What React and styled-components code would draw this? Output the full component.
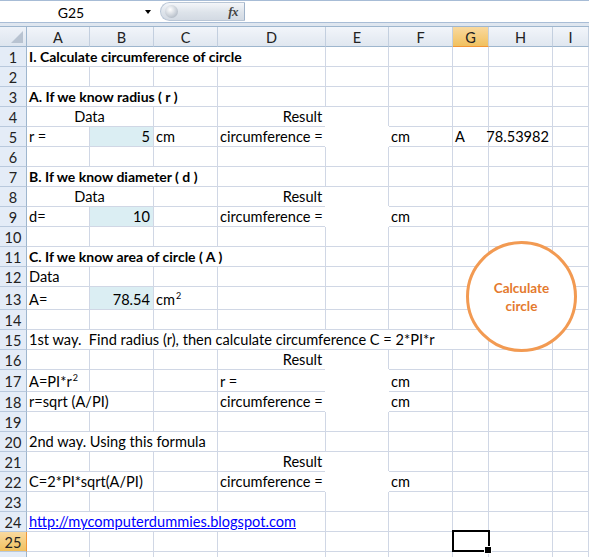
import React from 'react';
import styled, { createGlobalStyle, css } from 'styled-components';

const Global = createGlobalStyle`
  html, body { margin: 0; padding: 0; background: #fff; }
  body { font-family: Lato, "Liberation Sans", sans-serif; }
  * { box-sizing: border-box; }
`;

const COLS = '27px 63px 64px 64px 108px 63px 64px 36px 64px 1fr';
const GRID = '#d0d7e5';

const Window = styled.div`
  position: relative;
  width: 589px;
  height: 557px;
  overflow: hidden;
  background: #fff;
`;

const FormulaBar = styled.div`
  display: flex;
  height: 22px;
  border-top: 1px solid #a7bcd6;
  background: #fff;
`;

const NameBox = styled.div`
  width: 142px;
  display: flex;
  align-items: center;
  justify-content: center;
  font-size: 14px;
  color: #000;
  padding-top: 1px;
`;

const DropArea = styled.div`
  width: 18px;
  display: flex;
  align-items: center;
  justify-content: center;
  &::after {
    content: '';
    border-left: 3.5px solid transparent;
    border-right: 3.5px solid transparent;
    border-top: 4px solid #000;
    margin-left: -6px;
  }
`;

const Pill = styled.div`
  width: 85px;
  margin: 1px 0 1px 0;
  border-radius: 11px 0 0 11px;
  border: 1px solid #b9c6d6;
  border-right: 1px solid #9fb2c9;
  background: linear-gradient(#f4f6f9, #dde3ea 55%, #d3dae3);
  display: flex;
  align-items: center;
  justify-content: space-between;
  padding: 0 6px 0 4px;
`;

const Knob = styled.span`
  width: 13px;
  height: 13px;
  border-radius: 50%;
  background: radial-gradient(circle at 40% 35%, #ffffff, #c4cbd4 60%, #9aa4b0);
`;

const Fx = styled.span`
  font-family: "Liberation Serif", "DejaVu Serif", serif;
  font-style: italic;
  font-weight: bold;
  font-size: 13px;
  color: #444;
  letter-spacing: -0.5px;
`;

const FormulaInput = styled.div`
  flex: 1;
  background: #fff;
`;

const Separator = styled.div`
  height: 5px;
  background: #dfe6ef;
  border-top: 1px solid #a9bdd6;
  border-bottom: 1px solid #9eb6ce;
`;

const Sheet = styled.div`
  position: relative;
  display: grid;
  grid-template-columns: ${COLS};
  grid-template-rows: ${(p) => p.$rows};
`;

const headerBase = css`
  display: flex;
  align-items: center;
  justify-content: center;
  font-size: 14.5px;
  color: #222;
`;

const Corner = styled.div`
  position: relative;
  background: linear-gradient(#eef2f8, #dde5ef);
  border-right: 1px solid #9eb6ce;
  border-bottom: 1px solid #9eb6ce;
  &::after {
    content: '';
    position: absolute;
    right: 3px;
    bottom: 3px;
    width: 0;
    height: 0;
    border-left: 12px solid transparent;
    border-bottom: 12px solid #b8c3d1;
  }
`;

const ColHead = styled.div`
  ${headerBase}
  padding-top: 1px;
  border-right: 1px solid #c3cfdf;
  border-bottom: 1px solid #9eb6ce;
  background: ${(p) =>
    p.$active
      ? 'linear-gradient(#f9d99f, #f1c15f)'
      : 'linear-gradient(#f2f5fa, #e0e7f0)'};
  ${(p) => p.$active && 'border-bottom-color: #f29536;'}
`;

const RowHead = styled.div`
  ${headerBase}
  padding-top: 2px;
  border-right: 1px solid #9eb6ce;
  border-bottom: 1px solid #b9c9dd;
  background: ${(p) =>
    p.$active ? 'linear-gradient(#f9d99f, #f1c15f)' : '#e4ecf7'};
  ${(p) => p.$active && 'border-right-color: #f29536;'}
`;

const Cell = styled.div`
  position: relative;
  display: flex;
  align-items: flex-end;
  justify-content: ${(p) =>
    p.$align === 'right' ? 'flex-end' : p.$align === 'center' ? 'center' : 'flex-start'};
  padding: 0 3px 0 2px;
  font-size: ${(p) => (p.$bold ? '14px' : '14.6px')};
  line-height: 18px;
  color: #000;
  white-space: pre;
  font-weight: ${(p) => (p.$bold ? 700 : 400)};
  border-right: 1px solid ${GRID};
  border-bottom: 1px solid ${GRID};
  background: ${(p) => p.$fill || 'transparent'};
  grid-column: ${(p) => `${p.$col + 1} / span ${p.$span}`};
  ${(p) =>
    p.$blank &&
    css`
      border-color: #fff;
      background: #fff;
      z-index: 1;
      &::before {
        content: '';
        position: absolute;
        left: -1px;
        top: -1px;
        right: -1px;
        bottom: -1px;
        background: #fff;
      }
    `}
`;

const Text = styled.span`
  display: inline-block;
`;

const Sup = styled.sup`
  font-size: 9px;
  line-height: 0;
  vertical-align: 6px;
  margin-left: 1px;
`;

const Link = styled.a`
  color: #0000ff;
  text-decoration: underline;
`;

const Shape = styled.div`
  position: absolute;
  left: 466px;
  top: 214px;
  width: 111px;
  height: 111px;
  border: 3px solid #f29a52;
  border-radius: 50%;
  background: #fff;
  z-index: 2;
  display: flex;
  align-items: center;
  justify-content: center;
  text-align: center;
  font-weight: 700;
  font-size: 13.5px;
  line-height: 18px;
  color: #e47a2e;
`;

const Selection = styled.div`
  position: absolute;
  left: 452px;
  top: 503px;
  width: 38px;
  height: 22px;
  border: 2px solid #000;
  z-index: 3;
  &::after {
    content: '';
    position: absolute;
    right: -4px;
    bottom: -4px;
    width: 6px;
    height: 6px;
    background: #000;
    border: 1px solid #fff;
  }
`;

const FILL = '#dbeef3';

const ROWS = [
  { n: 1, h: 20, cells: [{ c: 1, span: 4, bold: true, text: 'I. Calculate circumference of circle' }] },
  { n: 2, h: 20, cells: [] },
  { n: 3, h: 20, cells: [{ c: 1, span: 3, bold: true, text: 'A. If we know radius ( r )' }] },
  { n: 4, h: 20, cells: [
    { c: 1, span: 2, align: 'center', text: 'Data' },
    { c: 4, span: 2, align: 'center', text: 'Result' },
  ] },
  { n: 5, h: 20, cells: [
    { c: 1, text: 'r =' },
    { c: 2, align: 'right', fill: FILL, text: '5' },
    { c: 3, text: 'cm' },
    { c: 4, text: 'circumference =' },
    { c: 5, blank: true },
    { c: 6, text: 'cm' },
    { c: 7, text: 'A' },
    { c: 8, align: 'right', text: '78.53982' },
  ] },
  { n: 6, h: 20, cells: [] },
  { n: 7, h: 20, cells: [{ c: 1, span: 3, bold: true, text: 'B. If we know diameter ( d )' }] },
  { n: 8, h: 20, cells: [
    { c: 1, span: 2, align: 'center', text: 'Data' },
    { c: 4, span: 2, align: 'center', text: 'Result' },
  ] },
  { n: 9, h: 20, cells: [
    { c: 1, text: 'd=' },
    { c: 2, align: 'right', fill: FILL, text: '10' },
    { c: 4, text: 'circumference =' },
    { c: 5, blank: true },
    { c: 6, text: 'cm' },
  ] },
  { n: 10, h: 20, cells: [] },
  { n: 11, h: 20, cells: [{ c: 1, span: 4, bold: true, text: 'C. If we know area of circle ( A )' }] },
  { n: 12, h: 20, cells: [{ c: 1, text: 'Data' }] },
  { n: 13, h: 23, cells: [
    { c: 1, text: 'A=' },
    { c: 2, align: 'right', fill: FILL, text: '78.54' },
    { c: 3, text: <>cm<Sup>2</Sup></> },
  ] },
  { n: 14, h: 20, cells: [] },
  { n: 15, h: 20, cells: [{ c: 1, span: 7, text: '1st way.  Find radius (r), then calculate circumference C = 2*PI*r' }] },
  { n: 16, h: 20, cells: [{ c: 4, span: 2, align: 'center', text: 'Result' }] },
  { n: 17, h: 22, cells: [
    { c: 1, text: <>A=PI*r<Sup>2</Sup></> },
    { c: 4, text: 'r =' },
    { c: 5, blank: true },
    { c: 6, text: 'cm' },
  ] },
  { n: 18, h: 20, cells: [
    { c: 1, span: 2, text: 'r=sqrt (A/PI)' },
    { c: 4, text: 'circumference =' },
    { c: 5, blank: true },
    { c: 6, text: 'cm' },
  ] },
  { n: 19, h: 20, cells: [] },
  { n: 20, h: 20, cells: [{ c: 1, span: 3, text: '2nd way. Using this formula' }] },
  { n: 21, h: 20, cells: [{ c: 4, span: 2, align: 'center', text: 'Result' }] },
  { n: 22, h: 20, cells: [
    { c: 1, span: 2, text: 'C=2*PI*sqrt(A/PI)' },
    { c: 4, text: 'circumference =' },
    { c: 5, blank: true },
    { c: 6, text: 'cm' },
  ] },
  { n: 23, h: 20, cells: [] },
  { n: 24, h: 20, cells: [{ c: 1, span: 4, link: true, text: 'http://mycomputerdummies.blogspot.com' }] },
  { n: 25, h: 20, cells: [] },
  { n: 26, h: 20, hideLabel: true, cells: [] },
];

const LETTERS = ['A', 'B', 'C', 'D', 'E', 'F', 'G', 'H', 'I'];

function fillRow(row) {
  const out = [];
  let col = 1;
  const sorted = [...row.cells].sort((a, b) => a.c - b.c);
  for (const cell of sorted) {
    while (col < cell.c) {
      out.push({ c: col });
      col += 1;
    }
    out.push(cell);
    col = cell.c + (cell.span || 1);
  }
  while (col <= 9) {
    out.push({ c: col });
    col += 1;
  }
  return out;
}

export default function App() {
  const rowTemplate = ['20px', ...ROWS.map((r) => `${r.h}px`)].join(' ');
  return (
    <Window>
      <Global />
      <FormulaBar>
        <NameBox>G25</NameBox>
        <DropArea />
        <Pill>
          <Knob />
          <Fx>fx</Fx>
        </Pill>
        <FormulaInput />
      </FormulaBar>
      <Separator />
      <Sheet $rows={rowTemplate}>
        <Corner />
        {LETTERS.map((l) => (
          <ColHead key={l} $active={l === 'G'}>{l}</ColHead>
        ))}
        {ROWS.map((row) => (
          <React.Fragment key={row.n}>
            <RowHead $active={row.n === 25}>{row.hideLabel ? '' : row.n}</RowHead>
            {fillRow(row).map((cell) => (
              <Cell
                key={cell.c}
                $col={cell.c}
                $span={cell.span || 1}
                $align={cell.align}
                $bold={cell.bold}
                $fill={cell.fill}
                $blank={cell.blank}
              >
                {cell.text !== undefined && (
                  <Text>{cell.link ? <Link>{cell.text}</Link> : cell.text}</Text>
                )}
              </Cell>
            ))}
          </React.Fragment>
        ))}
        <Shape>Calculate<br />circle</Shape>
        <Selection />
      </Sheet>
    </Window>
  );
}
